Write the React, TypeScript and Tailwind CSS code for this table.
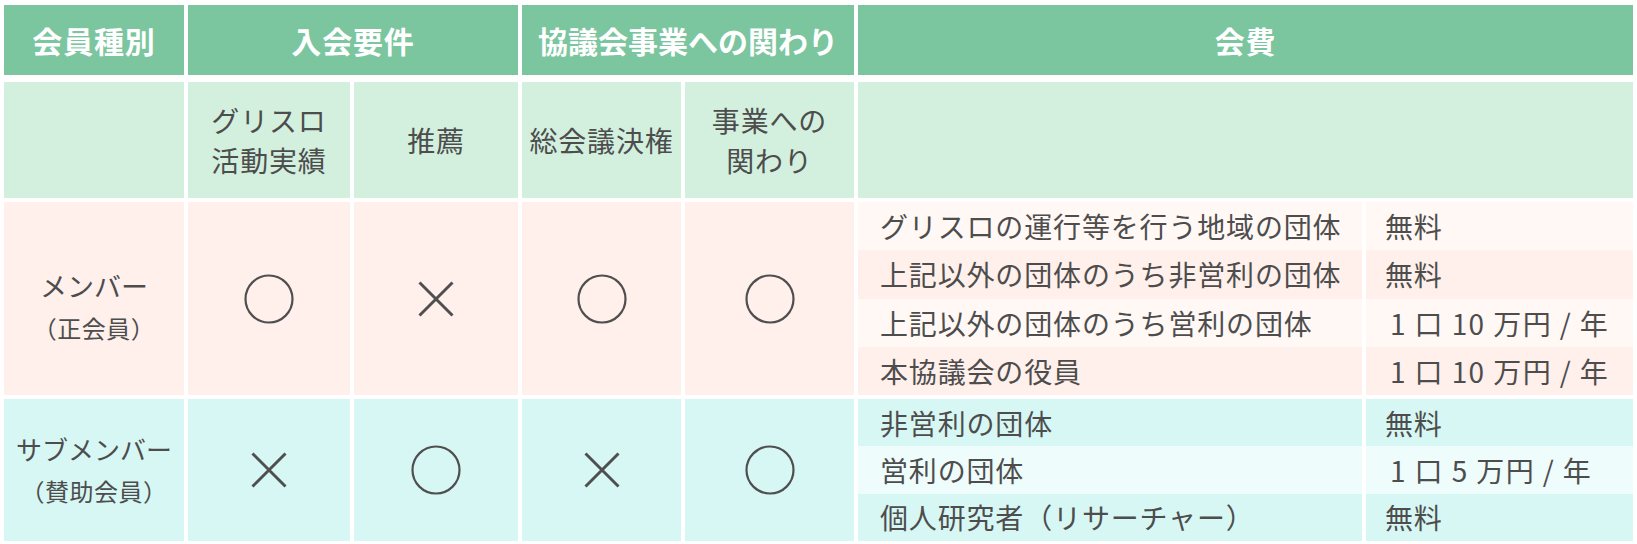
import React from 'react';

const FONT = '"Noto Sans CJK JP", "Noto Sans", sans-serif';

const cols = 'grid grid-cols-[180px_162px_164px_159px_169px_504px_267px] gap-x-1';

/** ○ mark */
const Circle = () => (
  <svg width="50" height="50" viewBox="0 0 50 50" aria-hidden="true">
    <circle cx="25" cy="25" r="23.5" fill="none" stroke="#4f4f4f" strokeWidth="2.2" />
  </svg>
);

/** × mark */
const Cross = () => (
  <svg width="36" height="36" viewBox="0 0 36 36" aria-hidden="true">
    <path d="M1.5 1.5 L34.5 34.5 M34.5 1.5 L1.5 34.5" stroke="#4f4f4f" strokeWidth="3" />
  </svg>
);

const Mark = ({ ok }: { ok: boolean }) => (ok ? <Circle /> : <Cross />);

type Fee = { label: string; fee: string; indent?: boolean };

const memberFees: Fee[] = [
  { label: 'グリスロの運行等を行う地域の団体', fee: '無料' },
  { label: '上記以外の団体のうち非営利の団体', fee: '無料' },
  { label: '上記以外の団体のうち営利の団体', fee: '1 口 10 万円 / 年', indent: true },
  { label: '本協議会の役員', fee: '1 口 10 万円 / 年', indent: true },
];

const subFees: Fee[] = [
  { label: '非営利の団体', fee: '無料' },
  { label: '営利の団体', fee: '1 口 5 万円 / 年', indent: true },
  { label: '個人研究者（リサーチャー）', fee: '無料' },
];

const FeeRows = ({ rows, even, odd }: { rows: Fee[]; even: string; odd: string }) => (
  <div className="col-span-2 grid grid-cols-[504px_267px] gap-x-1" style={{ gridTemplateRows: `repeat(${rows.length}, 1fr)` }}>
    {rows.map((r, i) => {
      const bg = i % 2 === 0 ? even : odd;
      return (
        <React.Fragment key={r.label}>
          <div className={`${bg} flex items-center pl-[22px]`}>{r.label}</div>
          <div className={`${bg} flex items-center ${r.indent ? 'pl-[24px] tracking-[0.05em]' : 'pl-[19px]'}`}>{r.fee}</div>
        </React.Fragment>
      );
    })}
  </div>
);

export default function App() {
  const head = 'bg-[#7bc59f] text-white font-bold text-[30px] flex items-center justify-center';
  const sub = 'bg-[#d3f0df] flex items-center justify-center text-center leading-[40px]';
  const pink = 'bg-[#fff0eb] flex items-center justify-center';
  const cyan = 'bg-[#d7f7f4] flex items-center justify-center';

  return (
    <div
      className="w-[1637px] h-[544px] bg-white px-1 pt-[5px] text-[#4d4d4d] text-[28px] tracking-[0.03em]"
      style={{ fontFamily: FONT }}
    >
      {/* header */}
      <div className={`${cols} h-[70px]`}>
        <div className={head}>会員種別</div>
        <div className={`${head} col-span-2`}>入会要件</div>
        <div className={`${head} col-span-2 tracking-normal`}>協議会事業への関わり</div>
        <div className={`${head} col-span-2`}>会費</div>
      </div>

      {/* sub header */}
      <div className={`${cols} h-[116px] mt-[7px]`}>
        <div className={sub} />
        <div className={sub}>
          グリスロ
          <br />
          活動実績
        </div>
        <div className={sub}>推薦</div>
        <div className={sub}>総会議決権</div>
        <div className={sub}>
          事業への
          <br />
          関わり
        </div>
        <div className={`${sub} col-span-2`} />
      </div>

      {/* メンバー */}
      <div className={`${cols} h-[193px] mt-1`}>
        <div className={`${pink} flex-col leading-[42px] pt-4 tracking-normal`}>
          <span className="text-[27px]">メンバー</span>
          <span className="text-[24px] tracking-[0.02em]">（正会員）</span>
        </div>
        <div className={pink}>
          <Mark ok />
        </div>
        <div className={pink}>
          <Mark ok={false} />
        </div>
        <div className={pink}>
          <Mark ok />
        </div>
        <div className={pink}>
          <Mark ok />
        </div>
        <FeeRows rows={memberFees} even="bg-[#fff8f5]" odd="bg-[#fff0eb]" />
      </div>

      {/* サブメンバー */}
      <div className={`${cols} h-[142px] mt-1`}>
        <div className={`${cyan} flex-col leading-[42px] tracking-normal`}>
          <span className="text-[26px]">サブメンバー</span>
          <span className="text-[24px] tracking-[0.02em]">（賛助会員）</span>
        </div>
        <div className={cyan}>
          <Mark ok={false} />
        </div>
        <div className={cyan}>
          <Mark ok />
        </div>
        <div className={cyan}>
          <Mark ok={false} />
        </div>
        <div className={cyan}>
          <Mark ok />
        </div>
        <FeeRows rows={subFees} even="bg-[#d7f7f4]" odd="bg-[#eefcfb]" />
      </div>
    </div>
  );
}
